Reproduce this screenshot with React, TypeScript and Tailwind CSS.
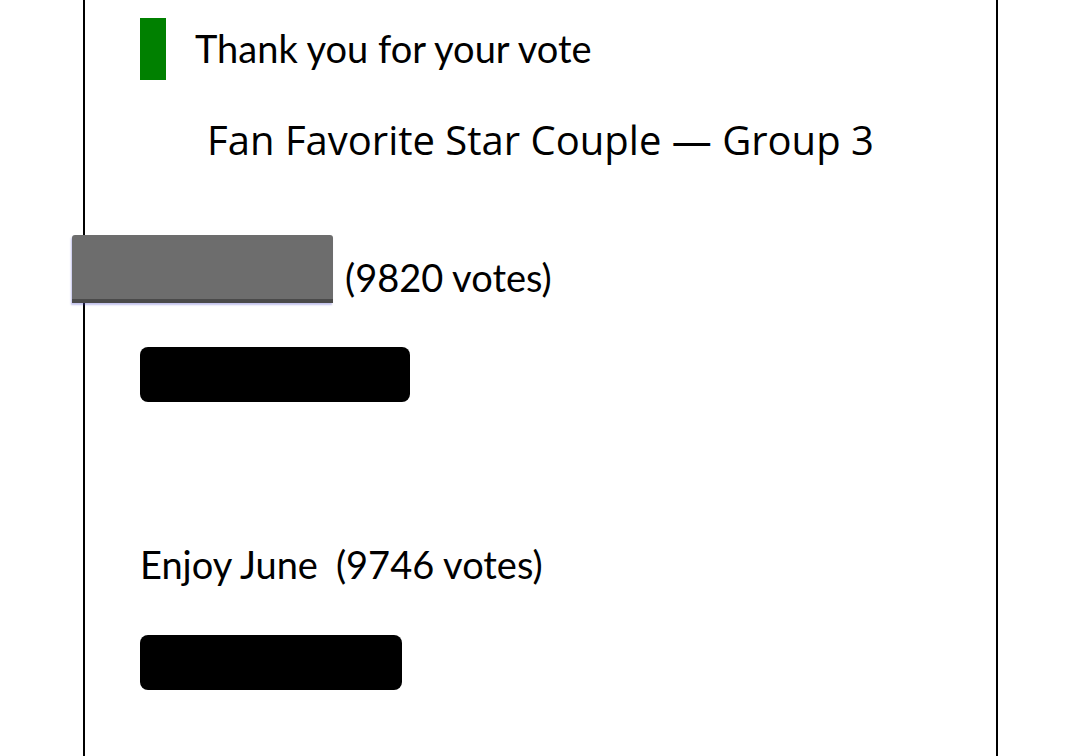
export default function App() {
  return (
    <div className="min-h-[756px] bg-white" style={{ fontFamily: 'Lato, sans-serif' }}>
      <div className="ml-[83px] w-[915px] border-x-2 border-black min-h-[756px] pt-[18px] pl-[55px] text-black">
        <div className="flex items-center h-[62px]">
          <div className="w-[26px] h-[62px] bg-[#008000]" />
          <span className="ml-[29px] text-[38px] leading-none pb-[3px]">Thank you for your vote</span>
        </div>
        <h1
          className="-ml-[55px] mt-[40px] text-center text-[40px] leading-none font-normal"
          style={{ fontFamily: '"Open Sans", sans-serif' }}
        >
          Fan Favorite Star Couple — Group 3
        </h1>
        <div className="mt-[75px] flex items-start">
          <div className="ml-[-68px] w-[261px] h-[68px] bg-[#6d6d6d] rounded-t-[3px] border-b-[4px] border-[#4a4a4a] shadow-[-1px_2px_2px_rgba(80,80,200,0.35)]" />
          <span className="ml-[12px] mt-[23px] text-[38px] leading-none">(9820 votes)</span>
        </div>
        <div className="mt-[44px] w-[270px] h-[55px] bg-black rounded-[8px]" />
        <div className="mt-[143px] flex items-center text-[38px] leading-none">
          <span>Enjoy June</span>
          <span className="ml-[18px]">(9746 votes)</span>
        </div>
        <div className="mt-[52px] w-[262px] h-[55px] bg-black rounded-[8px]" />
      </div>
    </div>
  );
}
